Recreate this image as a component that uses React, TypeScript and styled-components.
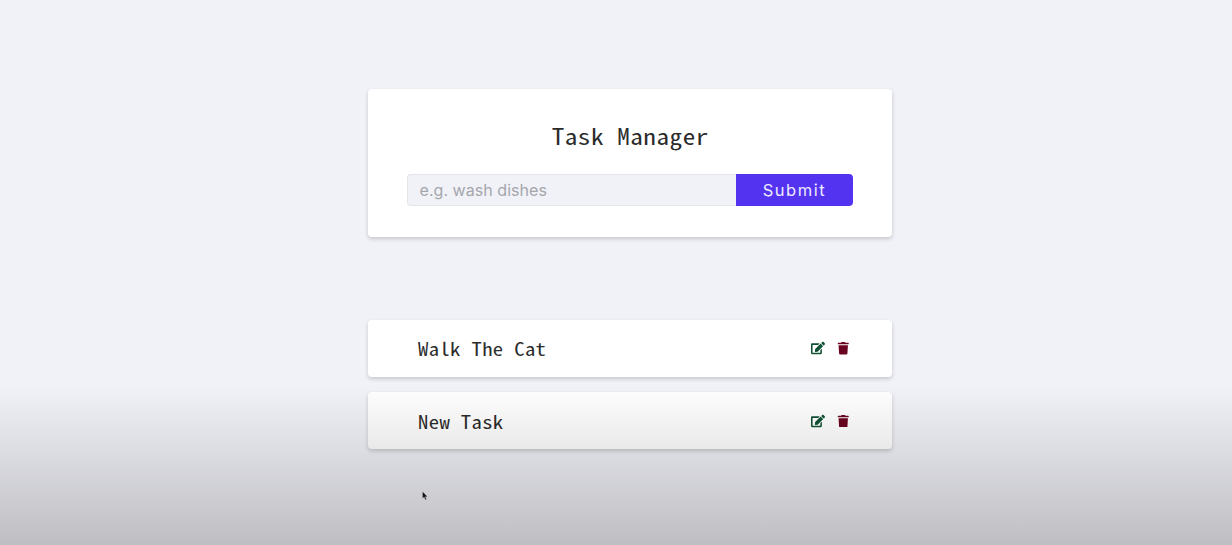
import React, { useState } from "react";
import styled, { createGlobalStyle } from "styled-components";
import { FaEdit, FaTrash } from "react-icons/fa";

const GlobalStyle = createGlobalStyle`
  * { box-sizing: border-box; }
  body { margin: 0; background: #f1f2f8; color: #2b2b2b; font-family: Inter, "Liberation Sans", sans-serif; }
`;
const mono = `"Noto Sans Mono CJK JP", "DejaVu Sans Mono", monospace`;

const Page = styled.main`
  position: relative;
  height: 545px;
  overflow: hidden;
  padding: 89px 339.6px 0 367.5px;
`;
const Card = styled.form`
  height: 148.4px;
  padding: 31px 39.4px 0 39px;
  background: #fff;
  border-radius: 4px;
  box-shadow: 0 2px 4px rgba(0, 0, 0, 0.18);
`;
const Title = styled.h1`
  margin: 0 0 24px;
  font: 400 22.4px/31px ${mono};
  height: 30px;
  letter-spacing: 0.5px;
  text-align: center;
  transform: scaleX(1.12);
`;
const Controls = styled.div`
  display: flex;
  height: 32.4px;
`;
const Input = styled.input`
  flex: 1;
  min-width: 0;
  padding: 0 12px;
  border: 1px solid #e3e6eb;
  border-right: 0;
  border-radius: 4px 0 0 4px;
  background: #f1f2f8;
  font: 400 16px Inter, sans-serif;
  letter-spacing: 0.05px;
  outline: 0;
  &::placeholder { color: #a4a6ac; opacity: 1; }
`;
const Submit = styled.button`
  width: 117.2px;
  padding: 0;
  border: 0;
  border-radius: 0 4px 4px 0;
  background: #5433f0;
  color: #eeebff;
  font: 400 16.5px Inter, sans-serif;
  letter-spacing: 1.5px;
`;
const List = styled.section`
  display: grid;
  gap: 15.4px;
  margin-top: 82.6px;
`;
const Item = styled.article`
  display: flex;
  align-items: center;
  height: 57px;
  padding: 0 42.7px 0 50.8px;
  background: #fff;
  border-radius: 4px;
  box-shadow: 0 2px 4px rgba(0, 0, 0, 0.18);
`;
const Name = styled.p`
  flex: 1;
  margin: 0;
  font: 400 18.3px/28px ${mono};
  letter-spacing: 0.36px;
  transform: scaleX(1.125);
  transform-origin: left;
`;
const Action = styled.button<{ $color: string }>`
  display: flex;
  margin-left: 12px;
  padding: 0;
  border: 0;
  background: none;
  color: ${(p) => p.$color};
`;
const Shade = styled.div`
  position: absolute;
  inset: 385px 0 0;
  pointer-events: none;
  background: linear-gradient(rgba(0, 0, 0, 0), rgba(4, 0, 0, 0.215));
`;
const Pointer = styled.svg`
  position: absolute;
  left: 422px;
  top: 491px;
`;

const tasks = ["Walk The Cat", "New Task"];

export default function App() {
  const [value, setValue] = useState("");
  return (
    <Page>
      <GlobalStyle />
      <Card onSubmit={(e) => e.preventDefault()}>
        <Title>Task Manager</Title>
        <Controls>
          <Input placeholder="e.g. wash dishes" value={value} onChange={(e) => setValue(e.target.value)} />
          <Submit>Submit</Submit>
        </Controls>
      </Card>
      <List>
        {tasks.map((t) => (
          <Item key={t}>
            <Name>{t}</Name>
            <Action $color="#0f5132" aria-label="Edit"><FaEdit size={14} /></Action>
            <Action $color="#6b0420" aria-label="Delete"><FaTrash size={12.5} /></Action>
          </Item>
        ))}
      </List>
      <Shade />
      <Pointer width="7" height="10" viewBox="0 0 7 10">
        <path d="M.5.5v7l1.6-1.4 1.2 2.7 1.2-.5-1.2-2.6H5.5z" fill="#111" stroke="#ddd" strokeWidth=".3" />
      </Pointer>
    </Page>
  );
}
